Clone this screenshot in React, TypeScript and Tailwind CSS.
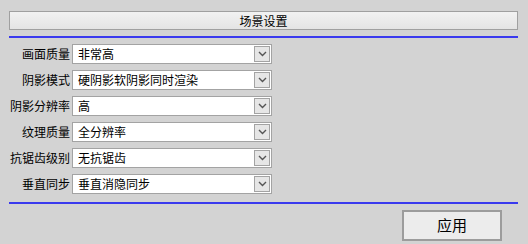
import React from 'react';

const rows: [string, string][] = [
  ['画面质量', '非常高'],
  ['阴影模式', '硬阴影软阴影同时渲染'],
  ['阴影分辨率', '高'],
  ['纹理质量', '全分辨率'],
  ['抗锯齿级别', '无抗锯齿'],
  ['垂直同步', '垂直消隐同步'],
];

const font = { fontFamily: '"Noto Sans CJK SC", "Noto Sans", sans-serif' };

const Chevron: React.FC = () => (
  <svg width="9" height="6" viewBox="0 0 9 6" fill="none">
    <path d="M1 1l3.5 3.5L8 1" stroke="#555" strokeWidth="1.4" />
  </svg>
);

const SelectRow: React.FC<{ label: string; value: string }> = ({ label, value }) => (
  <div className="flex items-center h-5">
    <div className="w-[63px] text-right text-[12px] text-black leading-none pr-[2px]">{label}</div>
    <div className="flex items-stretch w-[200px] h-5 border border-[#a3a3a3] bg-white">
      <div className="flex-1 pl-[5px] text-[12px] leading-[18px] text-black">{value}</div>
      <div className="w-4 flex items-center justify-center bg-[#e6e6e6] border border-[#a3a3a3] my-px mr-px">
        <Chevron />
      </div>
    </div>
  </div>
);

export default function App() {
  return (
    <div className="w-[528px] h-[244px] bg-[#d3d3d3] pl-[9px] pr-[10px] pt-[11px]" style={font}>
      <div className="h-[19px] border border-[#a0a0a0] bg-gradient-to-b from-[#f2f2f2] to-[#e4e4e4] flex items-center justify-center text-[12px] text-black">
        场景设置
      </div>
      <div className="mt-[6px] h-[2px] bg-[#3a3aee]" />
      <div className="mt-[6px] flex flex-col gap-[6px]">
        {rows.map(([l, v]) => (
          <SelectRow key={l} label={l} value={v} />
        ))}
      </div>
      <div className="mt-[8px] h-[2px] bg-[#3a3aee]" />
      <div className="flex justify-end pr-[16px] mt-[6px]">
        <button className="w-[100px] h-[31px] border-2 border-[#9c9c9c] bg-[#ececec] text-[15px] text-black flex items-center justify-center">
          应用
        </button>
      </div>
    </div>
  );
}
